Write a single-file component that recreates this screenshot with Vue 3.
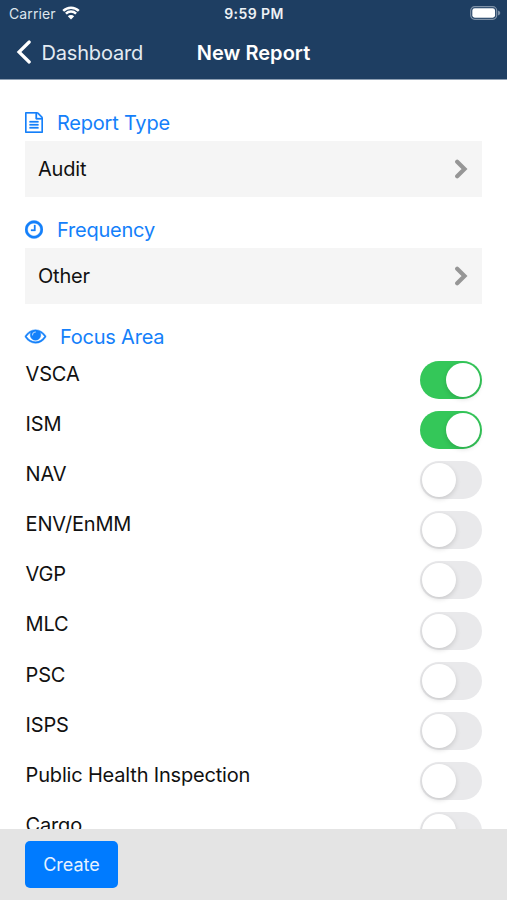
<script setup>
import { ref } from 'vue'

const areas = ref([
  { name: 'VSCA', on: true },
  { name: 'ISM', on: true },
  { name: 'NAV', on: false },
  { name: 'ENV/EnMM', on: false },
  { name: 'VGP', on: false },
  { name: 'MLC', on: false },
  { name: 'PSC', on: false },
  { name: 'ISPS', on: false },
  { name: 'Public Health Inspection', on: false },
  { name: 'Cargo', on: false },
])
</script>

<template>
  <div class="screen">
    <header class="header">
      <div class="status">
        <div class="carrier">
          <span>Carrier</span>
          <svg class="wifi" viewBox="0 0 18 14">
            <path d="M1.2 4.8a11.2 11.2 0 0 1 15.6 0" />
            <path d="M3.9 7.7a7.3 7.3 0 0 1 10.2 0" />
            <path class="dot" d="M9 13.6 5.8 10.3a4.6 4.6 0 0 1 6.4 0z" />
          </svg>
        </div>
        <span class="time">9:59 PM</span>
        <svg class="battery" viewBox="0 0 31 14">
          <rect class="shell" x="0.7" y="0.7" width="26" height="12.6" rx="4" />
          <rect class="charge" x="2.3" y="2.3" width="22.8" height="9.4" rx="2.4" />
          <path class="cap" d="M28 4.6q2.3 .7 2.3 2.4T28 9.4z" />
        </svg>
      </div>
      <nav class="nav">
        <div class="back">
          <svg viewBox="0 0 16 24"><path d="M13.2 2 3 12l10.2 10" /></svg>
          <span>Dashboard</span>
        </div>
        <h1>New Report</h1>
      </nav>
    </header>

    <main class="content">
      <section class="field">
        <h2>
          <svg class="icon" viewBox="0 0 1536 1792">
            <path d="M1468 380q28 28 48 76t20 88v1152q0 40-28 68t-68 28h-1344q-40 0-68-28t-28-68v-1600q0-40 28-68t68-28h896q40 0 88 20t76 48zm-444-244v376h376q-10-29-22-41l-313-313q-12-12-41-22zm384 1528v-1024h-416q-40 0-68-28t-28-68v-416h-768v1536h1280zm-1024-864q0-14 9-23t23-9h704q14 0 23 9t9 23v64q0 14-9 23t-23 9h-704q-14 0-23-9t-9-23v-64zm736 224q14 0 23 9t9 23v64q0 14-9 23t-23 9h-704q-14 0-23-9t-9-23v-64q0-14 9-23t23-9h704zm0 256q14 0 23 9t9 23v64q0 14-9 23t-23 9h-704q-14 0-23-9t-9-23v-64q0-14 9-23t23-9h704z" />
          </svg>
          <span>Report Type</span>
        </h2>
        <div class="select first">
          <span>Audit</span>
          <svg viewBox="0 0 14 20"><path d="M3.2 2.8 10.5 10l-7.3 7.2" /></svg>
        </div>
      </section>

      <section class="field">
        <h2>
          <svg class="icon" viewBox="128 0 1536 1792">
            <path d="M1024 544v448q0 14-9 23t-23 9h-320q-14 0-23-9t-9-23v-64q0-14 9-23t23-9h224v-352q0-14 9-23t23-9h64q14 0 23 9t9 23zm416 352q0-148-73-273t-198-198-273-73-273 73-198 198-73 273 73 273 198 198 273 73 273-73 198-198 73-273zm224 0q0 209-103 385.500t-279.500 279.500-385.500 103-385.500-103-279.500-279.500-103-385.500 103-385.500 279.500-279.500 385.500-103 385.500 103 279.500 279.500 103 385.500z" />
          </svg>
          <span>Frequency</span>
        </h2>
        <div class="select">
          <span>Other</span>
          <svg viewBox="0 0 14 20"><path d="M3.2 2.8 10.5 10l-7.3 7.2" /></svg>
        </div>
      </section>

      <section class="focus">
        <h2>
          <svg class="icon eye" viewBox="0 64 1792 1792">
            <path d="M1664 960q-152-236-381-353 61 104 61 225 0 185-131.500 316.500t-316.500 131.500-316.500-131.500-131.500-316.500q0-121 61-225-229 117-381 353 133 205 333.500 326.500t434.500 121.500 434.500-121.500 333.500-326.500zm-720-384q0-20-14-34t-34-14q-125 0-214.500 89.500t-89.500 214.500q0 20 14 34t34 14 34-14 14-34q0-86 61-147t147-61q20 0 34-14t14-34zm848 384q0 34-20 69-140 230-376.500 368.500t-499.500 138.500-499.500-139-376.500-368q-20-35-20-69t20-69q140-229 376.500-368t499.500-139 499.500 139 376.500 368q20 35 20 69z" />
          </svg>
          <span>Focus Area</span>
        </h2>
        <div v-for="area in areas" :key="area.name" class="row">
          <span class="name">{{ area.name }}</span>
          <span class="toggle" :class="{ on: area.on }" @click="area.on = !area.on">
            <span class="knob"></span>
          </span>
        </div>
      </section>
    </main>

    <footer class="footer">
      <button type="button">Create</button>
    </footer>
  </div>
</template>

<style>
body {
  margin: 0;
  background: #fff;
}
</style>

<style scoped>
.screen {
  display: flex;
  flex-direction: column;
  height: 900px;
  overflow: hidden;
  font-family: Inter, "Liberation Sans", sans-serif;
  font-size: 20px;
  letter-spacing: -0.18px;
  color: #111;
  background: #fff;
}
.header {
  flex: none;
  box-sizing: border-box;
  height: 80px;
  color: #fff;
  background: #1e3e62;
  border-bottom: 1px solid #8e9fb3;
}
.status {
  display: grid;
  grid-template-columns: 1fr auto 1fr;
  align-items: center;
  height: 27px;
  padding: 0 6px 0 9px;
  font-size: 14px;
  letter-spacing: 0.1px;
}
.carrier {
  display: flex;
  align-items: center;
  gap: 6px;
  color: #dde5ed;
}
.wifi {
  width: 18px;
  height: 14px;
  margin-bottom: 1px;
  fill: none;
  stroke: #fff;
  stroke-width: 2.5;
}
.wifi .dot {
  fill: #fff;
  stroke: none;
}
.time {
  font-weight: 600;
  letter-spacing: 0.42px;
  margin-right: 2px;
  color: #edf1f5;
}
.battery {
  justify-self: end;
  width: 31px;
  height: 14px;
  margin-bottom: 1px;
}
.shell {
  fill: none;
  stroke: #7f92a8;
  stroke-width: 1.2;
}
.charge {
  fill: #fff;
}
.cap {
  fill: #7f92a8;
}
.nav {
  display: grid;
  grid-template-columns: 1fr auto 1fr;
  align-items: center;
  height: 51px;
  padding: 0 16px;
}
.back {
  display: flex;
  align-items: center;
  gap: 9.5px;
  color: #e4ebf2;
}
.back svg {
  width: 16px;
  height: 24px;
  margin-bottom: 1px;
  fill: none;
  stroke: #fff;
  stroke-width: 3.2;
  stroke-linecap: round;
}
h1 {
  margin: 0;
  font-size: 20px;
  font-weight: 600;
  letter-spacing: 0.05px;
}
.content {
  flex: 1;
  min-height: 0;
  overflow: hidden;
  padding: 24px 24.7px 0 25.4px;
}
h2 {
  display: flex;
  align-items: center;
  gap: 13.6px;
  height: 37px;
  margin: 0;
  font-size: 20px;
  font-weight: 400;
  letter-spacing: -0.22px;
  color: #1480fa;
}
.icon {
  width: 18px;
  height: 21px;
  fill: currentColor;
  stroke: currentColor;
  stroke-width: 25;
}
.icon.eye {
  width: 21px;
  stroke-width: 40;
  overflow: visible;
}
.field {
  height: 107px;
}
.select {
  display: flex;
  align-items: center;
  justify-content: space-between;
  box-sizing: border-box;
  height: 56px;
  padding: 0 14px 0 12.6px;
  background: #f5f5f5;
}
.select.first {
  height: 56.4px;
}
.select svg {
  width: 14px;
  height: 20px;
  margin-bottom: 1px;
  fill: none;
  stroke: #969696;
  stroke-width: 4.2;
  stroke-linecap: round;
}
.row {
  display: flex;
  justify-content: space-between;
  height: 50.1px;
}
.name {
  padding-left: 0.2px;
  line-height: 38px;
}
.toggle {
  display: flex;
  box-sizing: border-box;
  width: 62.4px;
  height: 38px;
  margin-top: 6.1px;
  padding: 2px;
  border-radius: 19px;
  background: #e9e9eb;
}
.knob {
  width: 34px;
  height: 34px;
  border-radius: 50%;
  background: #fff;
  box-shadow: 0 2px 5px rgba(0, 0, 0, 0.14);
}
.toggle.on {
  justify-content: flex-end;
  padding-right: 2.5px;
  background: #34c759;
}
.footer {
  display: flex;
  align-items: flex-start;
  flex: none;
  box-sizing: border-box;
  height: 71px;
  padding: 12px 25px;
  background: #e4e4e4;
}
button {
  width: 93px;
  height: 47px;
  padding: 0;
  border: 0;
  border-radius: 5px;
  background: #007bff;
  color: #e6f2ff;
  font: 18px Inter, "Liberation Sans", sans-serif;
}
</style>
